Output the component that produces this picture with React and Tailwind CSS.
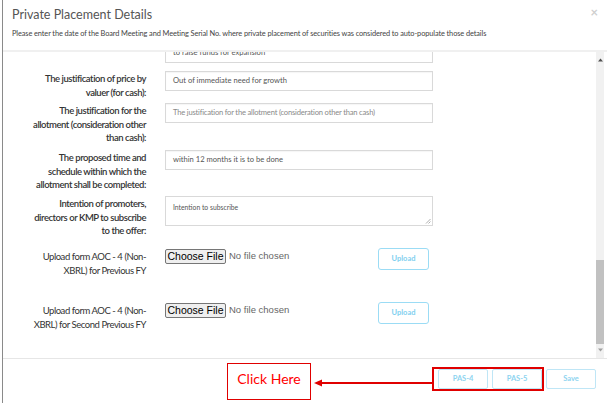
export default function App() {
  const font = { fontFamily: 'Lato, "Open Sans", sans-serif' };

  const Label = ({ lines, bold = true }) => (
    <div
      className={`w-[143px] shrink-0 text-right text-[9.5px] leading-[13.5px] tracking-[-0.45px] text-[#333] pt-[1px] ${bold ? "font-semibold" : "font-normal"}`}
    >
      {lines.map((l) => (
        <div key={l} className="whitespace-nowrap">{l}</div>
      ))}
    </div>
  );

  const Input = ({ value, placeholder }) => (
    <div className="w-[268px] h-[20px] border border-[#d9d9d9] bg-white flex items-center pl-[7px] text-[7.6px] shadow-[inset_0_1px_1px_rgba(0,0,0,0.04)]">
      {value ? (
        <span className="text-[#555]">{value}</span>
      ) : (
        <span className="text-[#8a8a8a] tracking-[-0.2px]">{placeholder}</span>
      )}
    </div>
  );

  const FileRow = ({ lines, h }) => (
    <div className={`flex gap-[19px] ${h}`}>
      <Label lines={lines} bold={false} />
      <div className="w-[268px] flex items-start">
        <div className="flex items-center gap-[3px]" style={{ fontFamily: '"Liberation Sans", Arial, sans-serif' }}>
          <button className="h-[15px] w-[61px] border border-[#767676] bg-[#efefef] rounded-[2px] text-[10.5px] leading-none text-black">
            Choose File
          </button>
          <span className="text-[9.5px] text-[#666]">No file chosen</span>
        </div>
        <button className="ml-auto mr-[4px] -mt-[1px] w-[51px] h-[22px] border border-[#9bdcf5] rounded-[3px] text-[7.5px] font-bold text-[#7fd0f0]">
          Upload
        </button>
      </div>
    </div>
  );

  return (
    <div className="w-[607px] h-[403px] bg-white overflow-hidden flex" style={font}>
      <div className="ml-[2px] border-l border-[#8a8a8a] flex-1 flex flex-col">
        {/* header */}
        <div className="h-[52px] shrink-0 relative pl-[9px] pt-[6px] border-b-2 border-[#f0f0f0]">
          <div className="text-[12.5px] text-[#555] leading-[17px]">Private Placement Details</div>
          <div className="mt-[6px] text-[7.4px] text-[#444] leading-[10px] tracking-[-0.1px]">
            Please enter the date of the Board Meeting and Meeting Serial No. where private placement of securities was considered to auto-populate those details
          </div>
          <span className="absolute right-[9px] top-[3px] text-[13px] font-bold text-[#cfcfcf]">×</span>
        </div>

        {/* body */}
        <div className="h-[307px] shrink-0 flex border-b border-[#e6e6e6]">
          <div className="flex-1 overflow-hidden">
            <div className="-mt-[9px] flex flex-col">
              <div className="flex gap-[19px] h-[28px]">
                <div className="w-[143px] shrink-0" />
                <Input value="to raise funds for expansion" />
              </div>
              <div className="flex gap-[19px] h-[32px]">
                <Label lines={["The justification of price by", "valuer (for cash):"]} />
                <Input value="Out of immediate need for growth" />
              </div>
              <div className="flex gap-[19px] h-[47px]">
                <Label lines={["The justification for the", "allotment (consideration other", "than cash):"]} />
                <Input placeholder="The justification for the allotment (consideration other than cash)" />
              </div>
              <div className="flex gap-[19px] h-[46px]">
                <Label lines={["The proposed time and", "schedule within which the", "allotment shall be completed:"]} />
                <Input value="within 12 months it is to be done" />
              </div>
              <div className="flex gap-[19px] h-[53px]">
                <Label lines={["Intention of promoters,", "directors or KMP to subscribe", "to the offer:"]} />
                <div className="relative w-[268px] h-[30px] border border-[#d9d9d9] bg-white pl-[7px] pt-[5px] text-[6.8px] text-[#555]">
                  Intention to subscribe
                  <svg className="absolute right-[1px] bottom-[1px]" width="6" height="6" viewBox="0 0 6 6">
                    <path d="M1 5.5L5.5 1M3.5 5.5L5.5 3.5" stroke="#999" strokeWidth="0.8" />
                  </svg>
                </div>
              </div>
              <FileRow lines={["Upload form AOC - 4 (Non-", "XBRL) for Previous FY"]} h="h-[54px]" />
              <FileRow lines={["Upload form AOC - 4 (Non-", "XBRL) for Second Previous FY"]} h="h-[40px]" />
            </div>
          </div>
          {/* scrollbar */}
          <div className="w-[8px] mr-[3px] bg-[#f1f1f1] flex flex-col items-center">
            <svg className="mt-[6px]" width="5" height="4" viewBox="0 0 5 4">
              <path d="M2.5 0.5L5 3.5H0Z" fill="#505050" />
            </svg>
            <div className="mt-[198px] w-full h-[84px] bg-[#c1c1c1]" />
            <svg className="mt-[4px]" width="5" height="4" viewBox="0 0 5 4">
              <path d="M0 0.5H5L2.5 3.5Z" fill="#a0a0a0" />
            </svg>
          </div>
        </div>

        {/* footer */}
        <div className="flex-1 flex items-start">
          <div className="ml-[224px] mt-[4px] w-[84px] h-[37px] border border-[#e00000] flex justify-center pt-[6px]">
            <span className="text-[14px] text-[#ff0000] leading-[18px]">Click Here</span>
          </div>
          <svg className="mt-[4px]" width="121" height="37" viewBox="0 0 121 37">
            <path d="M10 20H121" stroke="#e00000" strokeWidth="2" />
            <path d="M3 20L11 16.5V23.5Z" fill="#e00000" />
          </svg>
          <div className="mt-[8px] h-[24px] border-2 border-[#e00000] flex gap-[4px] pl-[4px]">
            <button className="w-[50px] h-[20px] border border-[#bfe6f6] rounded-[2px] text-[7.5px] font-bold text-[#8ed4f0]">PAS-4</button>
            <button className="w-[50px] h-[20px] border border-[#bfe6f6] rounded-[2px] text-[7.5px] font-bold text-[#8ed4f0]">PAS-5</button>
          </div>
          <button className="mt-[10px] ml-[2px] w-[50px] h-[20px] border border-[#bfe6f6] rounded-[2px] text-[7.5px] font-bold text-[#8ed4f0]">Save</button>
        </div>
      </div>
    </div>
  );
}
